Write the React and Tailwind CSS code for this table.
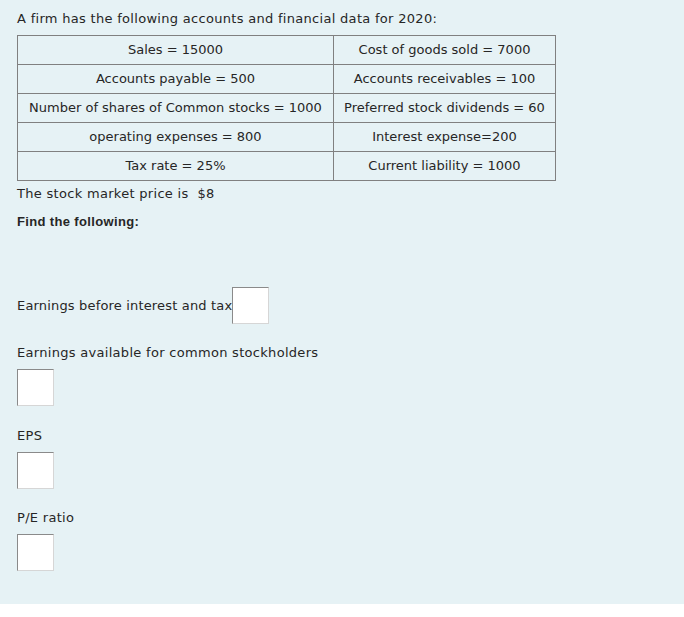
const ROWS = [
  ["Sales = 15000", "Cost of goods sold = 7000"],
  ["Accounts payable = 500", "Accounts receivables = 100"],
  ["Number of shares of Common stocks = 1000", "Preferred stock dividends = 60"],
  ["operating expenses = 800", "Interest expense=200"],
  ["Tax rate = 25%", "Current liability = 1000"],
];

function AnswerBox() {
  return (
    <div className="w-[37px] h-[37px] bg-white border border-t-[#8a8a8a] border-l-[#8a8a8a] border-r-[#d6d6d6] border-b-[#d6d6d6] shrink-0" />
  );
}

export default function App() {
  return (
    <div className="w-[684px] min-h-[617px] bg-white font-['Century_Gothic','DejaVu_Sans',sans-serif] text-[13px] text-[#262626]">
      <div className="bg-[#e6f2f5] pl-[17px] pt-[10px] pb-[33px] tracking-[0.3px]">
        <p className="leading-[18px]">A firm has the following accounts and financial data for 2020:</p>

        {/* data table */}
        <table className="mt-[7px] border-collapse w-[539px] tracking-normal">
          <tbody>
            {ROWS.map(([a, b]) => (
              <tr key={a} className="h-[29px]">
                <td className="border border-[#808080] text-center w-[316px] p-0">{a}</td>
                <td className="border border-[#808080] text-center p-0">{b}</td>
              </tr>
            ))}
          </tbody>
        </table>

        <p className="leading-[18px] mt-[4px]">The stock market price is&nbsp; $8</p>
        <p className="leading-[18px] mt-[10px] font-bold font-['Liberation_Sans',sans-serif] tracking-[0.35px]">Find the following:</p>

        <div className="flex items-center mt-[56px]">
          <span className="leading-[18px] tracking-[0.17px]">Earnings before interest and tax</span>
          <AnswerBox />
        </div>

        <p className="leading-[18px] mt-[20px]">Earnings available for common stockholders</p>
        <div className="mt-[7px]">
          <AnswerBox />
        </div>

        <p className="leading-[18px] mt-[21px]">EPS</p>
        <div className="mt-[7px]">
          <AnswerBox />
        </div>

        <p className="leading-[18px] mt-[20px]">P/E ratio</p>
        <div className="mt-[7px]">
          <AnswerBox />
        </div>
      </div>
    </div>
  );
}
